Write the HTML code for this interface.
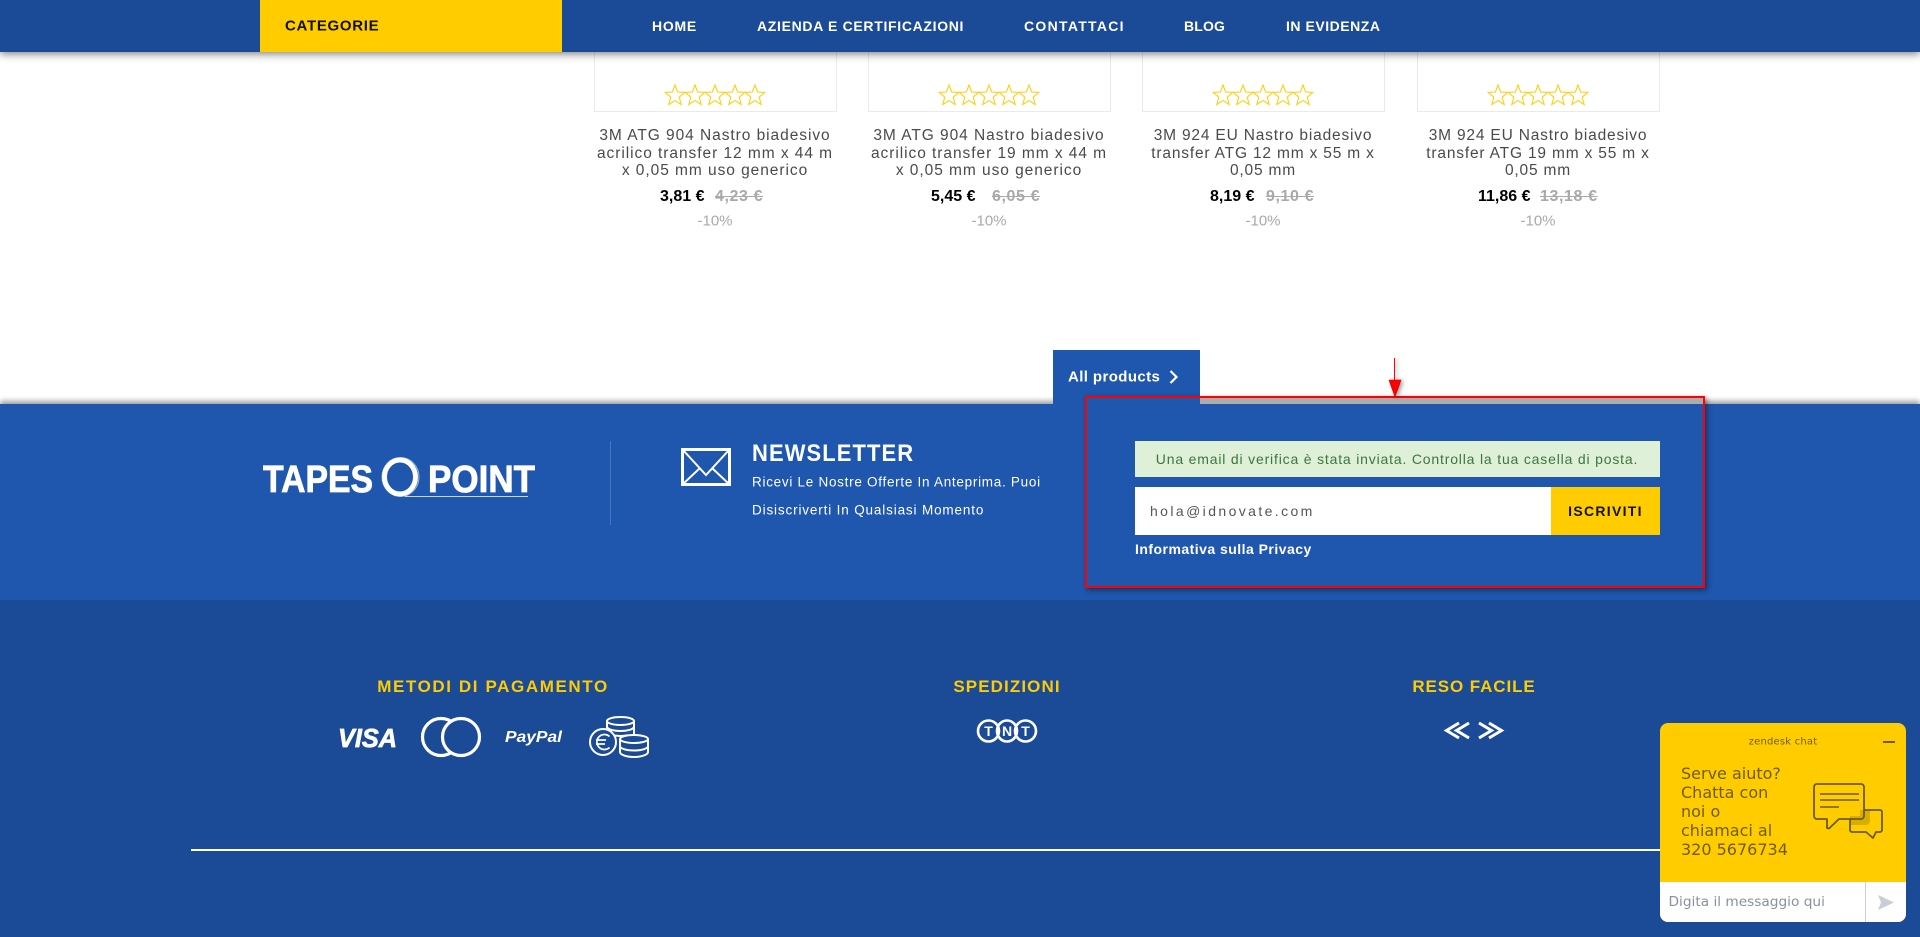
<!DOCTYPE html>
<html lang="it"><head><meta charset="utf-8"><title>Tapes Point</title>
<style>
html,body{margin:0;padding:0;background:#fff}
body{position:relative;width:1920px;height:937px;overflow:hidden;font-family:"Liberation Sans",sans-serif}
.a{position:absolute;white-space:nowrap}
.c{transform:translate(-50%,-50%)}
.m{transform:translateY(-50%)}
header{position:absolute;left:0;top:0;width:1920px;height:52px;background:#1b4a97;box-shadow:0 2px 8px rgba(0,0,0,.5);z-index:5}
.cat{position:absolute;left:260px;top:0;width:302px;height:52px;background:#fc0}
.nav{font-size:14px;font-weight:bold;color:#fff;letter-spacing:.75px;top:26px}
.card{position:absolute;top:40px;width:241px;height:70px;border:1px solid #eaeaea;box-sizing:content-box}
.stars{position:absolute;top:85px;overflow:visible}
.t{font-size:15.500px;color:#4a4a4a;letter-spacing:.95px;text-align:center}
.t2{letter-spacing:.82px}
.p{font-size:16px;font-weight:bold;color:#000;top:197px}
.o{font-size:16px;font-weight:bold;color:#a9a9a9;text-decoration:line-through;letter-spacing:.6px;top:197px}
.d{font-size:15px;color:#a9a9a9}
.band{position:absolute;left:0;top:404px;width:1920px;height:196px;background:#1f56ae;box-shadow:0 -3px 5px rgba(0,0,0,.38)}
.foot{position:absolute;left:0;top:600px;width:1920px;height:337px;background:#1b4a97}
.h{font-size:17px;font-weight:bold;color:#fc0;top:687px;letter-spacing:1.100px}
.chat{position:absolute;left:1660px;top:723px;width:246px;height:199px;border-radius:8px;background:#fc0;overflow:hidden;font-family:"DejaVu Sans",sans-serif;color:#705c05}
</style></head><body>

<div class="card" style="left:594px"></div>
<div class="card" style="left:868px"></div>
<div class="card" style="left:1142px"></div>
<div class="card" style="left:1417px"></div>

<svg width="0" height="0" style="position:absolute"><defs><g id="s"><polygon points="10,0 12.600,7 19.800,7.400 14.200,12.200 16.200,19.500 10,15.500 3.800,19.500 5.800,12.200 .2,7.400 7.400,7" fill="none" stroke="#fdd017" stroke-width="1.100"/></g>
<g id="five"><use href="#s"/><use href="#s" x="20"/><use href="#s" x="40"/><use href="#s" x="60"/><use href="#s" x="80"/></g></defs></svg>
<svg class="stars" style="left:665px" width="100" height="20"><use href="#five"/></svg>
<svg class="stars" style="left:939px" width="100" height="20"><use href="#five"/></svg>
<svg class="stars" style="left:1213px" width="100" height="20"><use href="#five"/></svg>
<svg class="stars" style="left:1488px" width="100" height="20"><use href="#five"/></svg>

<div class="a c t" style="left:715px;top:136px">3M ATG 904 Nastro biadesivo</div>
<div class="a c t" style="left:715px;top:153.500px">acrilico transfer 12 mm x 44 m</div>
<div class="a c t" style="left:715px;top:171px">x 0,05 mm uso generico</div>
<div class="a c t" style="left:989px;top:136px">3M ATG 904 Nastro biadesivo</div>
<div class="a c t" style="left:989px;top:153.500px">acrilico transfer 19 mm x 44 m</div>
<div class="a c t" style="left:989px;top:171px">x 0,05 mm uso generico</div>
<div class="a c t t2" style="left:1263px;top:136px">3M 924 EU Nastro biadesivo</div>
<div class="a c t t2" style="left:1263px;top:153.500px">transfer ATG 12 mm x 55 m x</div>
<div class="a c t t2" style="left:1263px;top:171px">0,05 mm</div>
<div class="a c t t2" style="left:1538px;top:136px">3M 924 EU Nastro biadesivo</div>
<div class="a c t t2" style="left:1538px;top:153.500px">transfer ATG 19 mm x 55 m x</div>
<div class="a c t t2" style="left:1538px;top:171px">0,05 mm</div>

<div class="a m p" style="left:660px">3,81 €</div><div class="a m o" style="left:715px">4,23 €</div>
<div class="a m p" style="left:931px">5,45 €</div><div class="a m o" style="left:992px">6,05 €</div>
<div class="a m p" style="left:1210px">8,19 €</div><div class="a m o" style="left:1266px">9,10 €</div>
<div class="a m p" style="left:1478px">11,86 €</div><div class="a m o" style="left:1540px">13,18 €</div>
<div class="a c d" style="left:715px;top:221px">-10%</div>
<div class="a c d" style="left:989px;top:221px">-10%</div>
<div class="a c d" style="left:1263px;top:221px">-10%</div>
<div class="a c d" style="left:1538px;top:221px">-10%</div>

<header>
<div class="cat"></div>
<div class="a m" style="left:285px;top:26px;font-size:15px;font-weight:bold;color:#111;letter-spacing:.7px">CATEGORIE</div>
<div class="a m nav" style="left:652px">HOME</div>
<div class="a m nav" style="left:757px;letter-spacing:.68px">AZIENDA E CERTIFICAZIONI</div>
<div class="a m nav" style="left:1024px;letter-spacing:1.300px">CONTATTACI</div>
<div class="a m nav" style="left:1184px;letter-spacing:.15px">BLOG</div>
<div class="a m nav" style="left:1286px;letter-spacing:.53px">IN EVIDENZA</div>
</header>

<div class="band"></div>
<div class="foot"></div>

<div style="position:absolute;left:1200px;top:398px;width:504px;height:6px;background:#adadad"></div>
<div style="position:absolute;left:1053px;top:350px;width:147px;height:54px;background:#1f56ae"></div>
<div class="a m" style="left:1068px;top:377px;font-size:15px;font-weight:bold;color:#fff;letter-spacing:.4px">All products</div>
<svg class="a" style="left:1168px;top:369px" width="12" height="16"><path d="M2.500 2 L8.500 8 L2.500 14" fill="none" stroke="#fff" stroke-width="2.200"/></svg>

<!-- annotation -->
<div style="position:absolute;left:1085px;top:396px;width:620px;height:192px;box-sizing:border-box;border:2px solid #f00;box-shadow:2px 2px 5px rgba(0,0,0,.45);"></div>
<svg class="a" style="left:1386px;top:356px;filter:drop-shadow(2px 1px 2px rgba(0,0,0,.4))" width="20" height="44"><line x1="8.500" y1="2" x2="8.500" y2="26" stroke="#f00" stroke-width="1"/><polygon points="3,24 15,24 9,41" fill="#f00" stroke="#c00" stroke-width=".6"/></svg>

<!-- logo -->
<svg class="a" style="left:255px;top:450px" width="290" height="55">
<text x="8" y="42" font-family="Liberation Sans" font-weight="bold" font-size="38" fill="#fff" stroke="#fff" stroke-width=".8" textLength="110" lengthAdjust="spacingAndGlyphs">TAPES</text>
<text x="173" y="42" font-family="Liberation Sans" font-weight="bold" font-size="38" fill="#fff" stroke="#fff" stroke-width=".8" textLength="107" lengthAdjust="spacingAndGlyphs">POINT</text>
<ellipse cx="145" cy="27" rx="15.500" ry="17" fill="none" stroke="#fff" stroke-width="5"/>
<ellipse cx="145.500" cy="27" rx="18.500" ry="19.500" fill="none" stroke="#fff" stroke-opacity=".6" stroke-width="1"/>
<line x1="150" y1="46.500" x2="273" y2="46.500" stroke="#fff" stroke-opacity=".75" stroke-width="1"/>
</svg>
<div style="position:absolute;left:610px;top:441px;width:1px;height:84px;background:#4a75bb"></div>

<svg class="a" style="left:681px;top:448px" width="50" height="38"><rect x="1.500" y="1.500" width="47" height="35" fill="none" stroke="#fff" stroke-width="3"/><path d="M2 2 L25 27 L48 2 M2 36 L19 20 M48 36 L31 20" fill="none" stroke="#fff" stroke-width="2"/></svg>
<div class="a" style="left:752px;top:454px;font-size:24px;font-weight:bold;color:#fff;letter-spacing:1.200px;transform-origin:left center;transform:translateY(-50%) scaleX(.915)">NEWSLETTER</div>
<div class="a m" style="left:752px;top:482px;font-size:13.500px;color:#fff;letter-spacing:.72px">Ricevi Le Nostre Offerte In Anteprima. Puoi</div>
<div class="a m" style="left:752px;top:510px;font-size:13.500px;color:#fff;letter-spacing:.85px">Disiscriverti In Qualsiasi Momento</div>

<div style="position:absolute;left:1135px;top:441px;width:525px;height:36px;background:#dff0d8"></div>
<div class="a c" style="left:1397px;top:459px;font-size:14px;color:#3c763d;letter-spacing:.82px">Una email di verifica è stata inviata. Controlla la tua casella di posta.</div>
<div style="position:absolute;left:1135px;top:487px;width:416px;height:48px;background:#fff"></div>
<div class="a m" style="left:1150px;top:511px;font-size:14px;color:#555;letter-spacing:2.400px">hola@idnovate.com</div>
<div style="position:absolute;left:1551px;top:487px;width:109px;height:48px;background:#fc0"></div>
<div class="a c" style="left:1605.500px;top:511px;font-size:14px;font-weight:bold;color:#111;letter-spacing:1.300px">ISCRIVITI</div>
<div class="a m" style="left:1135px;top:549px;font-size:14px;font-weight:bold;color:#fff;letter-spacing:.47px">Informativa sulla Privacy</div>

<!-- footer -->
<div class="a c h" style="left:493px;letter-spacing:1.600px">METODI DI PAGAMENTO</div>
<div class="a c h" style="left:1007px">SPEDIZIONI</div>
<div class="a c h" style="left:1474px;letter-spacing:.9px">RESO FACILE</div>

<svg class="a" style="left:330px;top:710px" width="330" height="56" fill="none">
<text x="8" y="37" font-family="Liberation Sans" font-weight="bold" font-style="italic" font-size="26" fill="#fff" stroke="#fff" stroke-width=".7" textLength="59" lengthAdjust="spacingAndGlyphs">VISA</text>
<circle cx="111" cy="27" r="18.500" stroke="#fff" stroke-width="3.200"/>
<circle cx="131" cy="27" r="18.500" stroke="#fff" stroke-width="3.200" fill="#1b4a97"/>
<text x="175" y="32" font-family="Liberation Sans" font-weight="bold" font-style="italic" font-size="15.500" fill="#fff" textLength="57" lengthAdjust="spacingAndGlyphs">PayPal</text>
<g stroke="#fff" stroke-width="2">
<ellipse cx="290.500" cy="11" rx="13.500" ry="4"/>
<path d="M277 17c1 2.500 7 4 13.500 4s12.500-1.500 13.500-4M285 25.500c2 .3 3.500.5 5.500.5 3 0 5.500-.3 6.500-.8"/>
<path d="M277 11v8M304 11v15"/>
<ellipse cx="304" cy="29" rx="14" ry="4" fill="#1b4a97"/>
<path d="M290 29v13c0 2.500 6 5 14 5s14-2.500 14-5V29M290 36c0 2.500 6 4.500 14 4.500s14-2 14-4.500"/>
<circle cx="273" cy="32" r="13" fill="#1b4a97"/>
<path d="M279.500 26.500a7.500 7.500 0 1 0 0 11M266 30h10M266 34h9" stroke-width="1.700"/>
</g>
</svg>

<svg class="a" style="left:975px;top:718px" width="66" height="27">
<g fill="none" stroke="#fff" stroke-width="2.600"><ellipse cx="13.500" cy="13" rx="10.500" ry="10.500"/><ellipse cx="32" cy="13" rx="10" ry="10.500"/><ellipse cx="50.500" cy="13" rx="10.500" ry="10.500"/></g>
<g font-family="Liberation Sans" font-weight="bold" font-size="14" fill="#fff" text-anchor="middle"><text x="13.500" y="18">T</text><text x="32" y="18">N</text><text x="50.500" y="18">T</text></g>
</svg>
<svg class="a" style="left:1441px;top:721px" width="68" height="19" fill="none" stroke="#fff" stroke-width="3"><path d="M18 2 L5.500 9.500 L18 17 M28 2 L15.500 9.500 L28 17 M38 2 L50.500 9.500 L38 17 M48 2 L60.500 9.500 L48 17" /></svg>

<div style="position:absolute;left:191px;top:849px;width:1480px;height:2px;background:#fff"></div>

<!-- chat -->
<div class="chat">
<div class="a c" style="left:123px;top:18.500px;font-size:10px;letter-spacing:.2px">zendesk chat</div>
<div style="position:absolute;left:223px;top:18px;width:12px;height:2px;background:#705c05"></div>
<div class="a" style="left:21px;top:41px;font-size:16px;line-height:19.100px">Serve aiuto?<br>Chatta con<br>noi o<br>chiamaci al<br>320 5676734</div>
<svg class="a" style="left:150px;top:55px" width="76" height="66" fill="none" stroke="#6b5a0c" stroke-width="1.800" stroke-linejoin="round">
<path d="M50 32 H60 V43 a4 4 0 0 1 -4 4 H40 V38 H50Z" fill="#d9ac00" stroke="none"/>
<path d="M54.500 32 H70 a2 2 0 0 1 2 2 V52 a2 2 0 0 1 -2 2 H66 L63 60 L56 54 H42 a2 2 0 0 1 -2 -2 V41"/>
<path d="M7 6 H51 a3 3 0 0 1 3 3 V38 a3 3 0 0 1 -3 3 H29 L19 50.500 L17 50 V41 H7 a3 3 0 0 1 -3 -3 V9 a3 3 0 0 1 3 -3Z"/>
<path d="M10 16 H49 M10 22 H49 M10 29 H29" stroke-width="1.500"/>
</svg>
<div style="position:absolute;left:0;top:159px;width:246px;height:40px;background:#fff"></div>
<div style="position:absolute;left:205px;top:159px;width:1px;height:40px;background:#c9d0d8"></div>
<div class="a m" style="left:8.500px;top:179px;font-size:13.700px;color:#87929e">Digita il messaggio qui</div>
<svg class="a" style="left:217px;top:171px" width="18" height="18"><polygon points="1,1 17,8.500 1,16 4,8.500" fill="#c6ced6"/></svg>
</div>
</body></html>
